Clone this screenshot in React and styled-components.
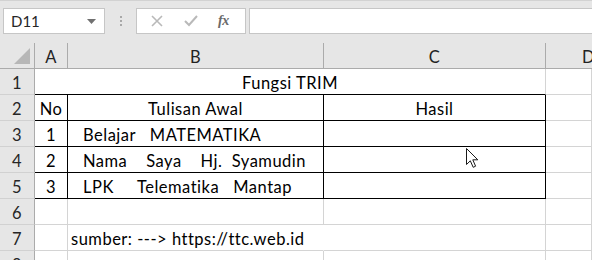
import styled, { createGlobalStyle } from "styled-components";

const GlobalStyle = createGlobalStyle`
    body {
        margin: 0;
        background: #ffffff;
        font-family: 'Lato', 'Liberation Sans', sans-serif;
        overflow: hidden;
    }
`

const COLS = "35px 33px 256px 222px 1fr";

const rows = [
    { n: 1, cells: "title" },
    { n: 2, a: "No", b: "Tulisan Awal", c: "Hasil", head: true, table: true },
    { n: 3, a: "1", b: "Belajar   MATEMATIKA", table: true },
    { n: 4, a: "2", b: "Nama    Saya    Hj.  Syamudin", table: true },
    { n: 5, a: "3", b: "LPK     Telematika   Mantap", table: true },
    { n: 6 },
    { n: 7, b: "sumber: ---> https://ttc.web.id", note: true },
    { n: 8 },
];

export default function App() {
    return (
        <Page>
            <GlobalStyle />
            <Toolbar>
                <NameBox>
                    D11
                    <svg width="9" height="5" viewBox="0 0 9 5">
                        <path d="M0 0 H9 L4.5 5 Z" fill="#707070" />
                    </svg>
                </NameBox>
                <Grip>
                    <i /><i /><i />
                </Grip>
                <FxBox>
                    <svg width="12" height="12" viewBox="0 0 12 12">
                        <path d="M1 1 L11 11 M11 1 L1 11" stroke="#b9b9b9" strokeWidth="1.6" />
                    </svg>
                    <svg width="14" height="12" viewBox="0 0 14 12">
                        <path d="M1 6 L5 10 L13 1" stroke="#b9b9b9" strokeWidth="2" fill="none" />
                    </svg>
                    <Fx>fx</Fx>
                </FxBox>
                <Formula />
            </Toolbar>

            <Sheet>
                <Row>
                    <Corner>
                        <svg width="17" height="17" viewBox="0 0 17 17">
                            <path d="M16 0 V16 H0 Z" fill="#b7b7b7" />
                        </svg>
                    </Corner>
                    <ColHead>A</ColHead>
                    <ColHead>B</ColHead>
                    <ColHead>C</ColHead>
                    <ColHead>D</ColHead>
                </Row>

                {rows.map((r) => (
                    <Row key={r.n}>
                        <RowHead>{r.n}</RowHead>
                        {r.cells === "title" ? (
                            <>
                                <Cell $span={3} $center $darkBottom>Fungsi TRIM</Cell>
                                <Cell />
                            </>
                        ) : (
                            <>
                                <Cell $center $darkRight={r.table} $darkBottom={r.table}>{r.a}</Cell>
                                <Cell
                                    $center={r.head}
                                    $indent={r.table && !r.head}
                                    $darkRight={r.table}
                                    $darkBottom={r.table}
                                    $overflow={r.note}
                                >
                                    {r.b}
                                </Cell>
                                <Cell $center $darkRight={r.table} $darkBottom={r.table}>{r.c}</Cell>
                                <Cell />
                            </>
                        )}
                    </Row>
                ))}

                <Pointer width="14" height="22" viewBox="0 0 14 22">
                    <path
                        d="M1.5 1.5 V17.5 L5.3 13.8 L8.2 20.3 L10.6 19.2 L7.8 12.8 H12.8 Z"
                        fill="#ffffff"
                        stroke="#1a1a1a"
                        strokeWidth="1"
                    />
                </Pointer>
            </Sheet>
        </Page>
    )
}

const Page = styled.div`
    width: 592px;
    height: 260px;
    background: #ffffff;
    overflow: hidden;
`
const Toolbar = styled.div`
    height: 43px;
    box-sizing: border-box;
    background: #e6e6e6;
    border-top: 1px solid #d2d2d2;
    display: flex;
    align-items: flex-start;
    padding: 7px 0 0 3px;
`
const NameBox = styled.div`
    width: 102px;
    height: 26px;
    box-sizing: border-box;
    background: #ffffff;
    border: 1px solid #c6c6c6;
    display: flex;
    align-items: center;
    justify-content: space-between;
    padding: 0 8px 0 7px;
    font-size: 15px;
    color: #262626;
`
const Grip = styled.div`
    width: 31px;
    height: 26px;
    display: flex;
    flex-direction: column;
    align-items: center;
    justify-content: center;
    gap: 2px;
    i {
        width: 2px;
        height: 2px;
        background: #a8a8a8;
    }
`
const FxBox = styled.div`
    width: 110px;
    height: 26px;
    box-sizing: border-box;
    background: #ffffff;
    border: 1px solid #c6c6c6;
    display: flex;
    align-items: center;
    justify-content: space-around;
    padding: 0 6px 0 4px;
`
const Fx = styled.span`
    font-family: 'Liberation Serif', serif;
    font-style: italic;
    font-weight: bold;
    font-size: 14px;
    color: #6a6a6a;
    letter-spacing: -0.5px;
`
const Formula = styled.div`
    flex: 1;
    height: 26px;
    margin-left: 3px;
    box-sizing: border-box;
    background: #ffffff;
    border: 1px solid #c6c6c6;
    border-right: none;
`
const Sheet = styled.div`
    position: relative;
    font-size: 16.5px;
    letter-spacing: 0.5px;
`
const Row = styled.div`
    display: grid;
    grid-template-columns: ${COLS};
    height: 26px;
`
const Corner = styled.div`
    background: #e6e6e6;
    border-right: 1px solid #ababab;
    border-bottom: 1px solid #ababab;
    display: flex;
    align-items: flex-end;
    justify-content: flex-end;
    padding: 0 3px 3px 0;
`
const ColHead = styled.div`
    background: #e6e6e6;
    border-right: 1px solid #ababab;
    border-bottom: 1px solid #ababab;
    display: flex;
    align-items: center;
    justify-content: center;
    padding-top: 2px;
    color: #222222;
    &:last-child {
        justify-content: flex-start;
        padding-left: 36px;
        border-right: none;
    }
`
const RowHead = styled.div`
    background: #e6e6e6;
    border-right: 1px solid #ababab;
    border-bottom: 1px solid #d1d1d1;
    display: flex;
    align-items: center;
    justify-content: center;
    padding-top: 2px;
    color: #262626;
`
const Cell = styled.div`
    grid-column: span ${({ $span }) => $span || 1};
    border-right: 1px solid ${({ $darkRight, $overflow }) => ($overflow ? "transparent" : $darkRight ? "#000000" : "#d4d4d4")};
    border-bottom: 1px solid ${({ $darkBottom }) => ($darkBottom ? "#000000" : "#d4d4d4")};
    display: flex;
    align-items: center;
    justify-content: ${({ $center }) => ($center ? "center" : "flex-start")};
    padding: 2px 0 0 ${({ $indent, $overflow }) => ($indent ? "15px" : $overflow ? "3px" : "0")};
    white-space: pre;
    overflow: ${({ $overflow }) => ($overflow ? "visible" : "hidden")};
    color: #000000;
    position: relative;
    z-index: ${({ $overflow }) => ($overflow ? 1 : 0)};
`
const Pointer = styled.svg`
    position: absolute;
    left: 465px;
    top: 104px;
    pointer-events: none;
`
